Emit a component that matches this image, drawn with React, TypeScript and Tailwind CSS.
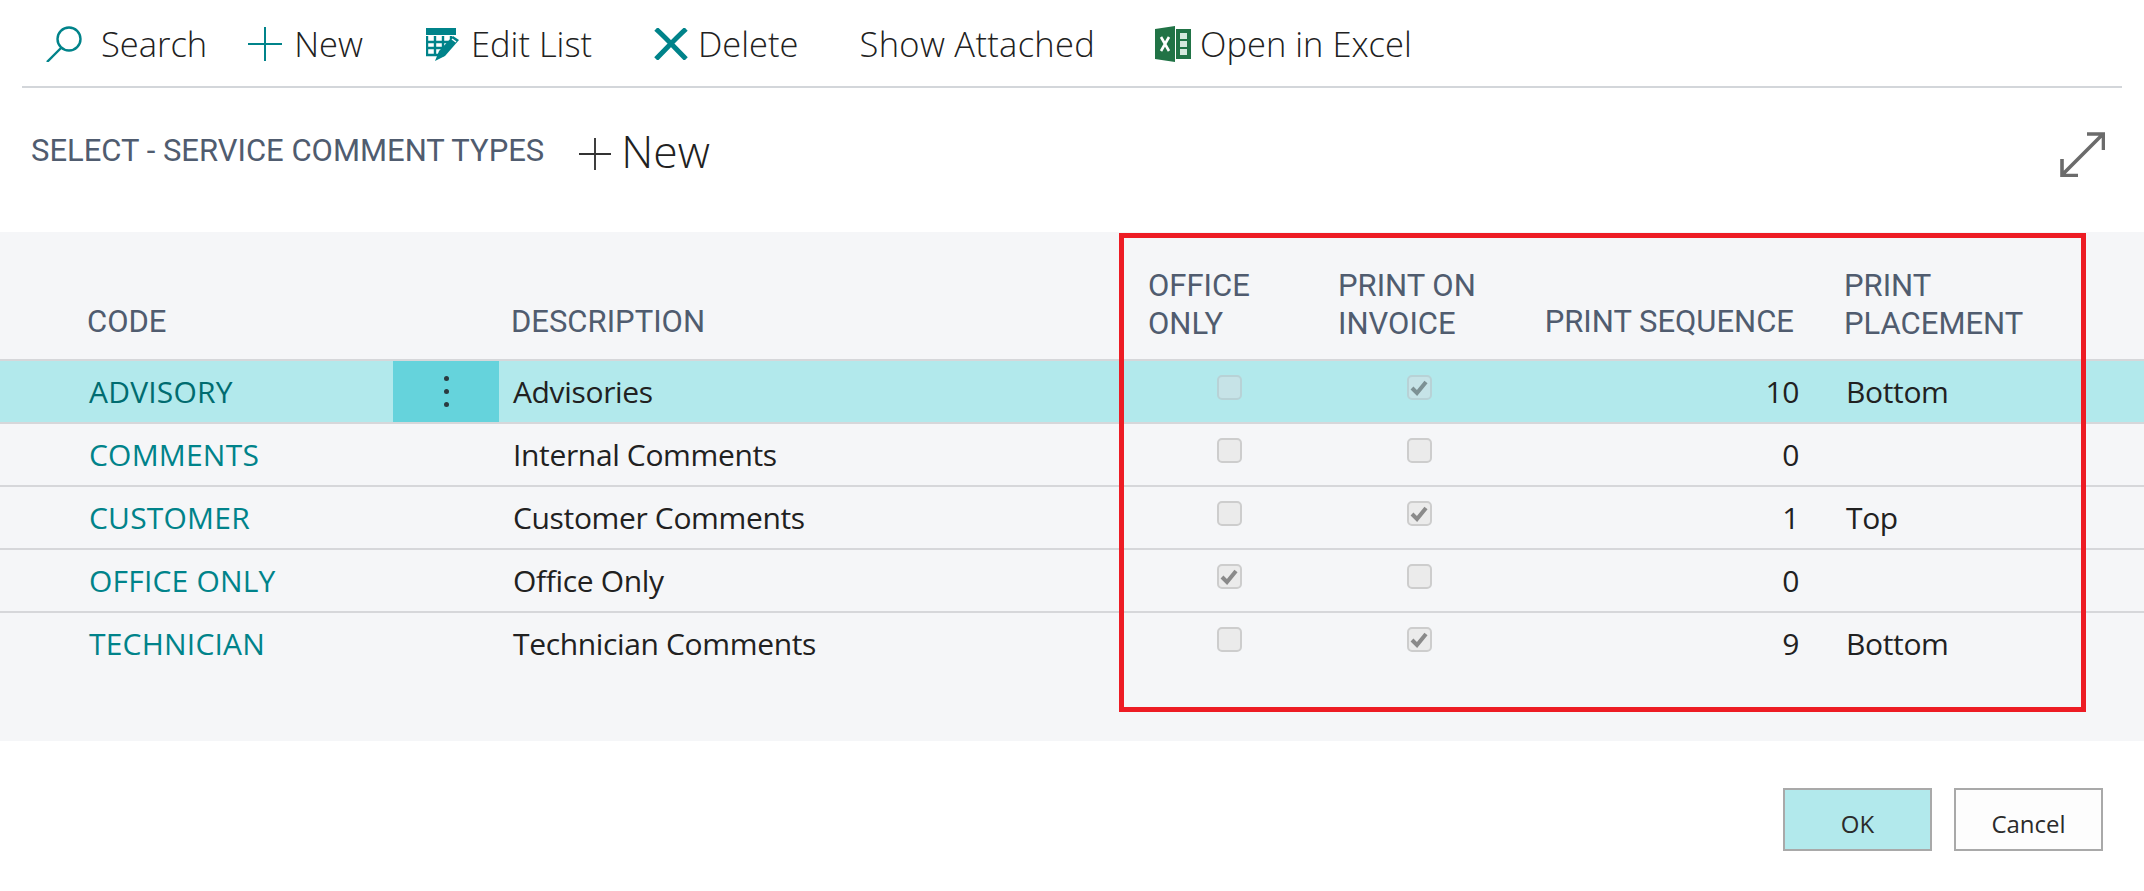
import React from "react";

const bodyFont = "font-['Open_Sans',sans-serif]";
const headFont = "font-['Roboto',sans-serif]";
const gridCols = "grid grid-cols-[393px_106px_635px_190px_190px_285px_1fr]";

const Plus: React.FC<{ className: string; color: string }> = ({ className, color }) => (
  <svg viewBox="0 0 34 34" className={className} fill="none" stroke={color} strokeWidth="2">
    <path d="M17 0V34M0 17H34" />
  </svg>
);

const SearchIcon = () => (
  <svg viewBox="0 0 36 36" className="w-9 h-9" fill="none" stroke="#00838a" strokeWidth="2.4">
    <circle cx="23" cy="13" r="11.5" />
    <path d="M15 22L1 36" />
  </svg>
);

const EditListIcon = () => (
  <svg viewBox="0 0 34 33" className="w-[34px] h-[33px]">
    <path d="M0 0H30V7H0Z" fill="#00838a" />
    <path d="M1 8V27H18M9 8V27M17 8V20M1 14H24M1 20H18M25 8V12" fill="none" stroke="#00838a" strokeWidth="2.4" />
    <path d="M9 33L13 23L27 8L33 12L19 28Z" fill="#00838a" />
    <path d="M26 11L30 14" stroke="#fff" strokeWidth="1.5" />
  </svg>
);

const DeleteIcon = () => (
  <svg viewBox="0 0 34 32" className="w-[34px] h-8" fill="none" stroke="#00838a" strokeWidth="5">
    <path d="M2 1C12 10 22 21 32 31M32 1C22 10 12 21 2 31" />
  </svg>
);

const ExcelIcon = () => (
  <svg viewBox="0 0 36 36" className="w-9 h-9">
    <path d="M0 3L20 0V36L0 33Z" fill="#217346" />
    <path d="M21 3H36V33H21Z" fill="#217346" />
    <path d="M6 11L14 25M14 11L6 25" stroke="#fff" strokeWidth="2.6" fill="none" />
    <path d="M25 7H32V13H25ZM25 15H32V21H25ZM25 23H32V29H25Z" fill="#d5e8dd" />
  </svg>
);

const ExpandIcon = () => (
  <svg viewBox="0 0 45 45" className="w-[45px] h-[45px]" fill="none" stroke="#6b6b6b" strokeWidth="3.6">
    <path d="M27 2H43.5V18M43 2L2 43M2 27V43.5H18" />
  </svg>
);

const Check: React.FC<{ checked: boolean; selected: boolean }> = ({ checked, selected }) => (
  <div
    className={`w-[25px] h-[25px] rounded-[5px] border-2 flex items-center justify-center ${
      selected ? "bg-[#c6e3e7] border-[#b8d2d6]" : "bg-[#ebebeb] border-[#cdcdcd]"
    }`}
  >
    {checked && (
      <svg viewBox="0 0 18 18" className="w-[18px] h-[18px]" fill="none" stroke={selected ? "#7d9194" : "#8a8a8a"} strokeWidth="4">
        <path d="M2 9L7 14L16 3" />
      </svg>
    )}
  </div>
);

const rows = [
  { code: "ADVISORY", desc: "Advisories", office: false, invoice: true, seq: "10", place: "Bottom" },
  { code: "COMMENTS", desc: "Internal Comments", office: false, invoice: false, seq: "0", place: "" },
  { code: "CUSTOMER", desc: "Customer Comments", office: false, invoice: true, seq: "1", place: "Top" },
  { code: "OFFICE ONLY", desc: "Office Only", office: true, invoice: false, seq: "0", place: "" },
  { code: "TECHNICIAN", desc: "Technician Comments", office: false, invoice: true, seq: "9", place: "Bottom" },
];

export default function App() {
  return (
    <div className={`w-[2144px] h-[891px] bg-white overflow-hidden relative text-[#212121] ${bodyFont}`}>
      {/* action bar */}
      <div className="mx-[22px] h-[88px] border-b-2 border-[#d3d6da] flex items-center pt-[2px] text-[34.5px] font-light">
        <div className="ml-6 flex items-center gap-[19px]">
          <SearchIcon />
          <span>Search</span>
        </div>
        <div className="ml-[41px] flex items-center gap-[12px]">
          <Plus className="w-[34px] h-[34px]" color="#00838a" />
          <span>New</span>
        </div>
        <div className="ml-[63px] flex items-center gap-[11px]">
          <EditListIcon />
          <span>Edit List</span>
        </div>
        <div className="ml-[62px] flex items-center gap-[10px]">
          <DeleteIcon />
          <span>Delete</span>
        </div>
        <span className="ml-[61px] tracking-[0.3px]">Show Attached</span>
        <div className="ml-[60px] flex items-center gap-[9px]">
          <ExcelIcon />
          <span>Open in Excel</span>
        </div>
      </div>

      {/* title */}
      <div className="h-[144px] pl-[31px] pr-[39px] flex items-center pb-[17px]">
        <span className={`${headFont} text-[31px] text-[#505c6f]`}>SELECT - SERVICE COMMENT TYPES</span>
        <Plus className="ml-[35px] w-8 h-8 mt-[4px]" color="#333333" />
        <span className="ml-[10px] text-[44.5px] font-light">New</span>
        <div className="ml-auto mt-[5px]">
          <ExpandIcon />
        </div>
      </div>

      {/* list */}
      <div className="h-[509px] bg-[#f5f6f8]">
        <div className={`${gridCols} h-[127px] items-end pb-[16px] ${headFont} text-[31px] leading-[38px] text-[#505c6f]`}>
          <div className="pl-[87px] mb-[2px]">CODE</div>
          <div />
          <div className="pl-[12px] mb-[2px]">DESCRIPTION</div>
          <div className="pl-[14px]">OFFICE<br />ONLY</div>
          <div className="pl-[14px]">PRINT ON<br />INVOICE</div>
          <div className="text-right pr-[5px] mb-[2px]">PRINT SEQUENCE</div>
          <div className="pl-[45px]">PRINT<br />PLACEMENT</div>
        </div>
        {rows.map((r, i) => {
          const selected = i === 0;
          return (
            <div
              key={r.code}
              className={`${gridCols} h-[63px] items-center text-[30px] tracking-[-0.35px] border-t-2 border-[#d6d7da] ${
                selected ? "bg-[#b2e9ec]" : ""
              }`}
            >
              <div className={`pl-[89px] tracking-[0.2px] ${selected ? "text-[#006c70]" : "text-[#00838a]"}`}>{r.code}</div>
              <div className={`h-full flex items-center justify-center ${selected ? "bg-[#65d3dc]" : ""}`}>
                {selected && (
                  <div className="flex flex-col gap-[8px]">
                    <div className="w-[5px] h-[5px] rounded-full bg-[#2a3a40]" />
                    <div className="w-[5px] h-[5px] rounded-full bg-[#2a3a40]" />
                    <div className="w-[5px] h-[5px] rounded-full bg-[#2a3a40]" />
                  </div>
                )}
              </div>
              <div className="pl-[14px]">{r.desc}</div>
              <div className="flex justify-center pb-[8px]"><Check checked={r.office} selected={selected} /></div>
              <div className="flex justify-center pb-[8px]"><Check checked={r.invoice} selected={selected} /></div>
              <div className="text-right">{r.seq}</div>
              <div className="pl-[47px]">{r.place}</div>
            </div>
          );
        })}
      </div>

      {/* dialog buttons */}
      <div className="flex justify-end gap-[22px] pt-[47px] pr-[41px] text-[24px]">
        <button className="w-[149px] h-[63px] border-2 border-[#a9a9a9] bg-[#b2e9ec] pt-[8px] text-[#2b2b2b]">OK</button>
        <button className="w-[149px] h-[63px] border-2 border-[#a9a9a9] bg-[#fdfdfd] pt-[8px] text-[#2b2b2b]">Cancel</button>
      </div>

      {/* red annotation over the list */}
      <div className="absolute left-[1119px] top-[233px] w-[967px] h-[479px] border-[5px] border-[#ed1c24] pointer-events-none" />
    </div>
  );
}
